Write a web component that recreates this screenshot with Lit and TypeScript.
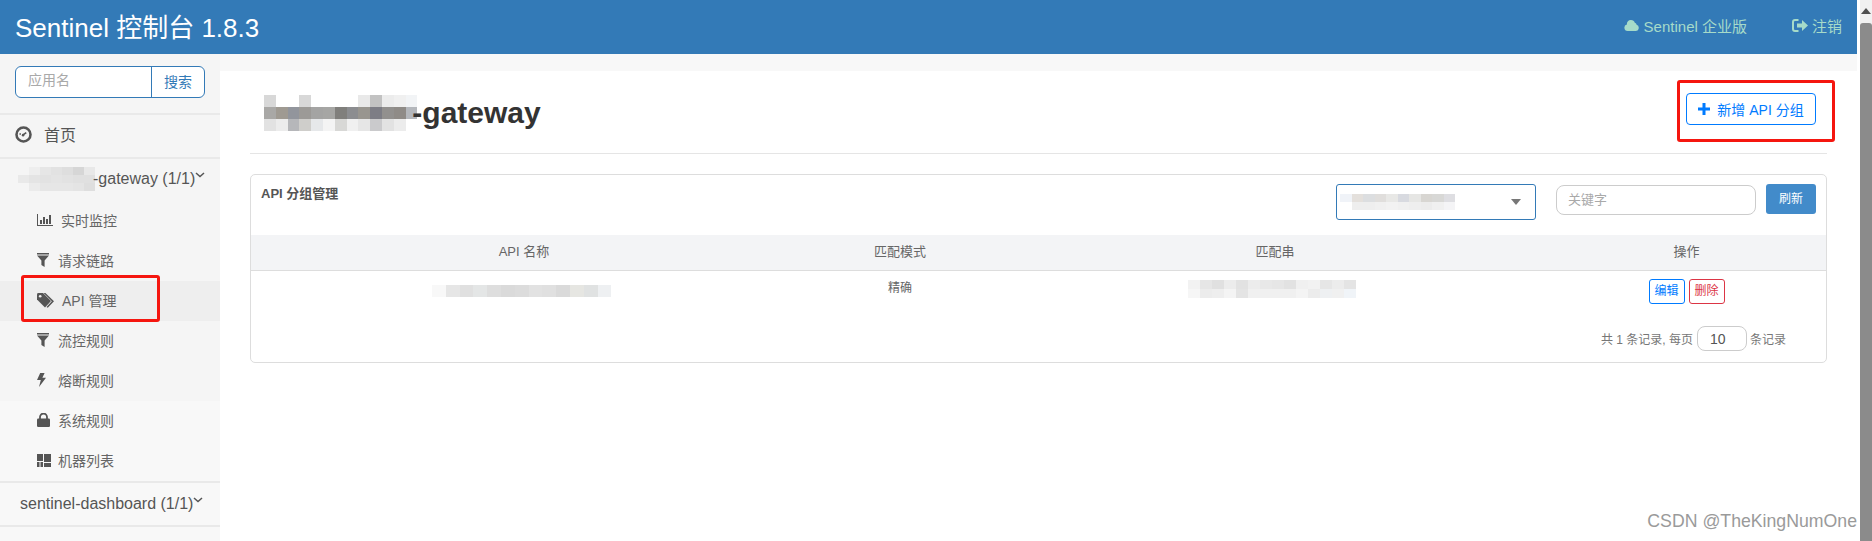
import { LitElement, html, css, svg } from "lit";
import { customElement } from "lit/decorators.js";

type Cell = string;
const mosaic = (rows: Cell[][], w: number, h: number) => html`<div class="mosaic">
  ${rows.map(
    (r) => html`<div class="mrow">
      ${r.map((c) => html`<b style="width:${w}px;height:${h}px;background:${c === "-" ? "transparent" : "#" + c}"></b>`)}
    </div>`
  )}
</div>`;

const TITLE = [
  "d8d8d8 - - d8d8d8 - - - - e9e9e9 c2c2c2 ececec f0f0f0 f2f4f6".split(" "),
  "a9a8a6 9f9a92 92959c 9c9a97 a4a4a3 a6a6a4 807f7c 8c8d90 98958f 7d7d85 92908e 8f8b87 b4b7bc".split(" "),
  "e2e2e2 ececec b6b7ba cfcecb e6e8ea f4f4f4 d8d8d6 f0f0f0 e6e6e6 cacacc e2e2e2 ececec -".split(" "),
];
const SIDE = [
  "- eeeeee e6e6e6 e2e2e2 dedede d6d6d6 e8e8e8".split(" "),
  "e9e9e9 e4e4e4 e2e2e2 e4e4e4 e2e2e2 e0e0e0 e0e0e0".split(" "),
  "- ebebeb e6e6e6 e6e6e6 e6e6e6 e4e4e4 dedede".split(" "),
];
const SEL = [
  "f0f3f8 e4e0dc dcdee0 e0dedc e8e8e6 d8dae0 e6e6e4 d8d6d2 d8d8d6 dedee2".split(" "),
  "- eeeeee eeeeee f0f0f0 f2f2f2 f0f0f0 eeeeee ececec f0f0f0 f4f4f6".split(" "),
];
const NAME = [
  "f8f8f8 e6e6e6 e0e0e0 e4e6e6 dedede dadada dcdcdc e2e2e2 e0e0e0 dadada e6e6e2 e0e2e2 eef0f2".split(" "),
];
const MATCH = [
  "f2f2f2 e6e6e6 e0e0e0 ececec e2e2e2 ececec e8e8e8 e6e6e6 e2e2e2 f0f0f0 f2f2f2 e6e6e6 ececec e4e4e4".split(" "),
  "f6f6f6 ececec eeeeee f4f4f4 e4e4e4 f0f0f0 f0f0f0 f0f0f0 f0f0f0 f4f4f4 ececec eef0f2 f0f0f0 f0f4f8".split(" "),
];

const icons: Record<string, any> = {
  gauge: svg`<svg class="ic home-ic" viewBox="0 0 16 16"><circle cx="8" cy="8" r="6.6" fill="none" stroke="currentColor" stroke-width="2.4"/><path d="M4.2 7.6h1.4M10.6 6.2l-3 2.2" stroke="currentColor" stroke-width="1.5" fill="none"/><circle cx="7.6" cy="8.6" r="1.2" fill="currentColor"/></svg>`,
  bars: svg`<svg class="ic" width="16" height="12" viewBox="0 0 16 12"><path d="M0 0h1v11h15v1H0z" fill="currentColor"/><path d="M3 6h2v4H3zM6 3h2v7H6zM9 5h2v5H9zM12 1h2v9h-2z" fill="currentColor"/></svg>`,
  filter: svg`<svg class="ic" width="12" height="14" viewBox="0 0 12 14"><path d="M0 0h12v1.6H0zM0 2.6h12L7.6 7.4V14L4.4 12V7.4z" fill="currentColor"/></svg>`,
  tags: svg`<svg class="ic" width="18" height="15" viewBox="0 0 18 15"><path d="M0 1.4Q0 0 1.4 0H6l8 8-6 6.4-8-8z" fill="currentColor"/><path d="M8.4 0l8.6 8.2-6.2 6.6-1.3-.9 5.300-5.700L6.600 0z" fill="currentColor"/><circle cx="3.200" cy="3.200" r="1.300" fill="#eee"/></svg>`,
  bolt: svg`<svg class="ic" width="9" height="14" viewBox="0 0 9 14"><path d="M3.200 0H7.600L5.400 4.800H9L2 14l1.800-7H0z" fill="currentColor"/></svg>`,
  lock: svg`<svg class="ic" width="13" height="14" viewBox="0 0 13 14"><path d="M3 6V4a3.500 3.500 0 0 1 7 0v2" fill="none" stroke="currentColor" stroke-width="1.800"/><rect y="5.500" width="13" height="8.500" rx="1.200" fill="currentColor"/></svg>`,
  grid: svg`<svg class="ic" width="14" height="13" viewBox="0 0 14 13"><path d="M0 0h6v7H0zM0 8h2.500v5H0zM3.500 8H6v5H3.500zM7 0h7v8H7zM7 9h7v4H7z" fill="currentColor"/></svg>`,
};

const chevron = html`<svg class="chev" width="10" height="6" viewBox="0 0 10 6"><path d="M1 1l4 3.600L9 1" fill="none" stroke="currentColor" stroke-width="1.500"/></svg>`;

const menu = [
  { icon: "bars", label: "实时监控", cls: "g2" },
  { icon: "filter", label: "请求链路", cls: "" },
  { icon: "tags", label: "API 管理", cls: "g3 active" },
  { icon: "filter", label: "流控规则", cls: "" },
  { icon: "bolt", label: "熔断规则", cls: "" },
  { icon: "lock", label: "系统规则", cls: "" },
  { icon: "grid", label: "机器列表", cls: "" },
];

@customElement("app-root")
export class AppRoot extends LitElement {
  static styles = css`
    :host {
      display: flex;
      height: 541px;
      overflow: hidden;
      position: relative;
      background: #fff;
      font-family: "Liberation Sans", "Noto Sans CJK SC", sans-serif;
      color: #555;
    }
    .page { width: 1857px; display: flex; flex-direction: column; flex: none; }
    .gap3 { width: 3px; flex: none; background: #fff; }
    .scroll { width: 12px; flex: none; background: #f1f1f1; display: flex; flex-direction: column; align-items: center; }
    .arrow { height: 23px; display: flex; align-items: center; justify-content: center; padding-bottom: 2px; box-sizing: border-box; }
    .arrow i { border: 5px solid transparent; border-top: 0; border-bottom: 6px solid #505050; }
    .thumb { flex: 1; width: 100%; background: #8b8b8b; border-radius: 3px 3px 0 0; }

    header { height: 54px; background: #337ab7; display: flex; align-items: center; color: #fff; flex: none; }
    .brand { font-size: 26px; margin-left: 15px; padding-bottom: 4px; flex: 1; }
    .hlink { display: flex; align-items: center; color: #a6dbc9; font-size: 15px; gap: 5px; padding-bottom: 3px; }
    .hlink.a { margin-right: 45px; }
    .hlink.b { margin-right: 15px; gap: 4px; }

    .body { flex: 1; display: flex; min-height: 0; }
    aside { width: 220px; flex: none; background: #f8f8f8; display: flex; flex-direction: column; }
    .top { background: #f5f5f5; }
    .search { height: 59px; padding: 12px 15px 0; box-sizing: border-box; }
    .igroup { display: flex; height: 32px; border: 1px solid #337ab7; border-radius: 6px; background: #fff; box-sizing: border-box; }
    .igroup .ph { width: 136px; box-sizing: border-box; padding-left: 12px; line-height: 27px; font-size: 14px; color: #a9a9a9; border-right: 1px solid #337ab7; }
    .igroup .btn { flex: 1; text-align: center; line-height: 31px; font-size: 14px; color: #337ab7; }
    .sep { border-top: 2px solid #e9e9e9; }
    .home { height: 42px; display: flex; align-items: center; padding: 0 0 4px 15px; box-sizing: border-box; font-size: 16px; gap: 12px; color: #555; }
    .home-ic { width: 17px; height: 17px; }
    .group { height: 42px; display: flex; align-items: center; padding: 0 0 3px 18px; box-sizing: border-box; font-size: 16px; color: #555; }
    .group.plain { padding: 0 0 1px 20px; }
    .group .chev { margin-left: 0; margin-bottom: 7px; color: #555; }
    .group .t { white-space: pre; }
    .group .mosaic { margin-right: -2px; }
    .item { height: 40px; display: flex; align-items: center; padding: 0 0 2px 37px; font-size: 14px; color: #666; box-sizing: border-box; }
    .item .box { width: 21px; display: flex; flex: none; color: #555; }
    .item.g2 .box { width: 24px; }
    .item.g3 .box { width: 25px; }
    .item.active { background: #eee; }

    main { flex: 1; background: #f8f8f8; padding-top: 17px; display: flex; min-width: 0; }
    .wrap { flex: 1; background: #fff; padding: 0 30px; }
    .titlebar { height: 82px; display: flex; align-items: center; justify-content: space-between; border-bottom: 1px solid #e5e5e5; }
    .title { display: flex; align-items: center; margin: 2px 0 0 14px; font-size: 30px; font-weight: 700; color: #333; }
    .title span { margin-left: -5px; }
    .add { width: 130px; height: 32px; box-sizing: border-box; margin-right: 11px; margin-bottom: 7px; border: 1px solid #007bff; border-radius: 4px; color: #007bff; font-size: 14px; display: flex; align-items: center; justify-content: center; gap: 7px; }

    .card { margin-top: 20px; height: 189px; box-sizing: border-box; border: 1px solid #ddd; border-radius: 5px; display: flex; flex-direction: column; }
    .tools { height: 60px; box-sizing: border-box; display: flex; align-items: flex-start; padding: 9px 10px 0 10px; flex: none; }
    .tools h3 { margin: 0; font-size: 13px; font-weight: 700; color: #555; flex: 1; line-height: 20px; }
    .select { width: 200px; height: 36px; box-sizing: border-box; border: 1px solid #337ab7; border-radius: 3px; display: flex; align-items: center; justify-content: space-between; padding: 0 14px 0 3px; margin-right: 20px; }
    .caret { border: 5px solid transparent; border-bottom: 0; border-top: 6px solid #777; }
    .kw { width: 200px; height: 30px; box-sizing: border-box; border: 1px solid #ccc; border-radius: 8px; font-size: 13px; color: #a9a9a9; padding-left: 11px; line-height: 28px; margin: 1px 10px 0 0; flex: none; }
    .refresh { width: 50px; height: 30px; background: #428bca; color: #fff; border-radius: 3px; font-size: 12px; text-align: center; line-height: 30px; flex: none; }

    .cols { display: grid; grid-template-columns: 546px 206px 544px 1fr; }
    .thead { height: 36px; box-sizing: border-box; background: #f3f4f6; border-bottom: 1px solid #ddd; font-size: 13px; color: #666; text-align: center; line-height: 34px; flex: none; }
    .trow { height: 52px; font-size: 12px; color: #666; text-align: center; flex: none; }
    .trow .c { display: flex; justify-content: center; padding-top: 9px; }
    .trow .c.txt { line-height: 16px; padding-top: 9px; }
    .trow .c.blur1 { padding-top: 14px; justify-content: flex-start; padding-left: 181px; }
    .trow .c.blur2 { justify-content: flex-start; padding-left: 185px; }
    .ops { gap: 4px; padding-top: 8px !important; }
    .op { width: 36px; height: 25px; box-sizing: border-box; border: 1px solid #007bff; border-radius: 3px; color: #007bff; line-height: 23px; font-size: 12px; }
    .op.del { border-color: #dc3545; color: #dc3545; }
    .pager { display: flex; justify-content: flex-end; align-items: center; padding-right: 40px; font-size: 12px; color: #777; gap: 4px; margin-top: 3px; }
    .size { width: 50px; height: 25px; box-sizing: border-box; border: 1px solid #ccc; border-radius: 8px; font-size: 14px; color: #555; padding-left: 12px; line-height: 25px; margin-right: -1px; }

    .mosaic { display: flex; flex-direction: column; flex: none; }
    .mrow { display: flex; }
    .mrow b { display: block; }

    .redbox { position: absolute; border: 3px solid #f5160f; border-radius: 3px; box-sizing: border-box; pointer-events: none; }
    .r1 { left: 21px; top: 275px; width: 139px; height: 47px; }
    .r2 { left: 1677px; top: 80px; width: 158px; height: 62px; }
    .wm { position: absolute; right: 15px; bottom: 9px; font-size: 17.700px; color: #9a9a9a; }
  `;

  render() {
    return html`
      <div class="page">
        <header>
          <div class="brand">Sentinel 控制台 1.8.3</div>
          <div class="hlink a">
            <svg width="15" height="11" viewBox="0 0 15 11"><path d="M3.500 11a3.300 3.300 0 0 1-.6-6.500A4 4 0 0 1 7 0a4 4 0 0 1 3.800 2.800A2.200 2.200 0 0 1 12.600 4.800 3.200 3.200 0 0 1 12 11z" fill="currentColor"/></svg>
            Sentinel 企业版
          </div>
          <div class="hlink b">
            <svg width="16" height="13" viewBox="0 0 16 13"><path d="M6.500 1H3a2 2 0 0 0-2 2v7a2 2 0 0 0 2 2h3.500" fill="none" stroke="currentColor" stroke-width="2"/><path d="M5 4.500h5V1l6 5.500-6 5.500V8.500H5z" fill="currentColor"/></svg>
            注销
          </div>
        </header>
        <div class="body">
          <aside>
            <div class="top">
              <div class="search">
                <div class="igroup"><div class="ph">应用名</div><div class="btn">搜索</div></div>
              </div>
              <div class="sep"></div>
              <div class="home">${icons.gauge}<span>首页</span></div>
              <div class="sep"></div>
              <div class="group">${mosaic(SIDE, 11, 8)}<span class="t">-gateway (1/1)</span>${chevron}</div>
              ${menu.slice(0, 5).map(
                (m) => html`<div class="item ${m.cls}"><span class="box">${icons[m.icon]}</span>${m.label}</div>`
              )}
            </div>
            ${menu.slice(5).map(
              (m) => html`<div class="item ${m.cls}"><span class="box">${icons[m.icon]}</span>${m.label}</div>`
            )}
            <div class="sep"></div>
            <div class="group plain"><span class="t">sentinel-dashboard (1/1)</span>${chevron}</div>
            <div class="sep"></div>
          </aside>
          <main>
            <div class="wrap">
              <div class="titlebar">
                <div class="title">${mosaic(TITLE, 11.800, 12)}<span>-gateway</span></div>
                <div class="add">
                  <svg width="12" height="12" viewBox="0 0 12 12"><path d="M4.500 0h3v4.500H12v3H7.500V12h-3V7.500H0v-3h4.500z" fill="currentColor"/></svg>
                  <span>新增 API 分组</span>
                </div>
              </div>
              <section class="card">
                <div class="tools">
                  <h3>API 分组管理</h3>
                  <div class="select">${mosaic(SEL, 11.500, 8)}<span class="caret"></span></div>
                  <div class="kw">关键字</div>
                  <div class="refresh">刷新</div>
                </div>
                <div class="thead cols">
                  <div>API 名称</div><div>匹配模式</div><div>匹配串</div><div>操作</div>
                </div>
                <div class="trow cols">
                  <div class="c blur1">${mosaic(NAME, 13.800, 12)}</div>
                  <div class="c txt">精确</div>
                  <div class="c blur2">${mosaic(MATCH, 12, 9)}</div>
                  <div class="c ops"><div class="op">编辑</div><div class="op del">删除</div></div>
                </div>
                <div class="pager">
                  <span>共 1 条记录, 每页</span>
                  <div class="size">10</div>
                  <span>条记录</span>
                </div>
              </section>
            </div>
          </main>
        </div>
      </div>
      <div class="gap3"></div>
      <div class="scroll">
        <div class="arrow"><i></i></div>
        <div class="thumb"></div>
      </div>
      <div class="redbox r1"></div>
      <div class="redbox r2"></div>
      <div class="wm">CSDN @TheKingNumOne</div>
    `;
  }
}
